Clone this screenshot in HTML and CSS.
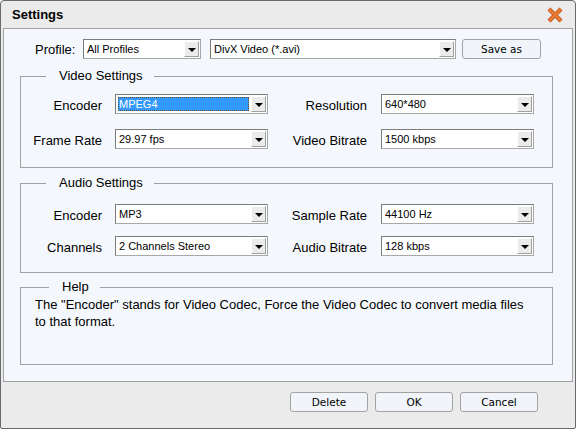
FILE: index.html
```html
<!DOCTYPE html>
<html lang="en">
<head>
    <meta charset="UTF-8">
    <title>Settings</title>
    <link rel="stylesheet" href="styles.css">
</head>
<body>
<div class="window">
    <div class="titlebar">
        <span class="title">Settings</span>
        <svg class="close" width="16" height="16" viewBox="0 0 16 16">
            <path d="M2 2 L14 14 M14 2 L2 14" stroke="#b5501a" stroke-width="4.2" fill="none"/>
            <path d="M2 2 L14 14 M14 2 L2 14" stroke="#ec7a32" stroke-width="2.6" fill="none"/>
        </svg>
    </div>

    <div class="panel">
        <div class="profile-row">
            <span class="profile-label">Profile:</span>
            <div class="combo profile-combo"><span class="combo-value">All Profiles</span><span class="combo-arrow"></span></div>
            <div class="combo format-combo"><span class="combo-value">DivX Video (*.avi)</span><span class="combo-arrow"></span></div>
            <button type="button" class="btn save-btn">Save as</button>
        </div>

        <fieldset class="group video-group">
            <legend>Video Settings</legend>
            <div class="fields">
                <span class="field-label">Encoder</span>
                <div class="combo"><span class="combo-value selected">MPEG4</span><span class="combo-arrow"></span></div>
                <span class="field-label right">Resolution</span>
                <div class="combo"><span class="combo-value">640*480</span><span class="combo-arrow"></span></div>

                <span class="field-label">Frame Rate</span>
                <div class="combo"><span class="combo-value">29.97 fps</span><span class="combo-arrow"></span></div>
                <span class="field-label right">Video Bitrate</span>
                <div class="combo"><span class="combo-value">1500 kbps</span><span class="combo-arrow"></span></div>
            </div>
        </fieldset>

        <fieldset class="group audio-group">
            <legend>Audio Settings</legend>
            <div class="fields">
                <span class="field-label">Encoder</span>
                <div class="combo"><span class="combo-value">MP3</span><span class="combo-arrow"></span></div>
                <span class="field-label right">Sample Rate</span>
                <div class="combo"><span class="combo-value">44100 Hz</span><span class="combo-arrow"></span></div>

                <span class="field-label">Channels</span>
                <div class="combo"><span class="combo-value">2 Channels Stereo</span><span class="combo-arrow"></span></div>
                <span class="field-label right">Audio Bitrate</span>
                <div class="combo"><span class="combo-value">128 kbps</span><span class="combo-arrow"></span></div>
            </div>
        </fieldset>

        <fieldset class="group help-group">
            <legend>Help</legend>
            <p class="help-text">The "Encoder" stands for Video Codec, Force the Video Codec to convert media files to that format.</p>
        </fieldset>
    </div>

    <div class="footer">
        <button type="button" class="btn">Delete</button>
        <button type="button" class="btn">OK</button>
        <button type="button" class="btn">Cancel</button>
    </div>
</div>
</body>
</html>
```

FILE: styles.css
```css
body {
    margin: 0;
    font-family: "Liberation Sans", Arial, sans-serif;
    font-size: 13px;
    color: #000;
    background: #fff;
}
.window {
    width: 576px;
    height: 429px;
    box-sizing: border-box;
    border: 1px solid #6a6a6a;
    border-radius: 4px 4px 2px 2px;
    background: #ebebeb;
    display: flex;
    flex-direction: column;
}
.titlebar {
    height: 27px;
    display: flex;
    align-items: center;
    justify-content: space-between;
    padding: 0 12px 0 11px;
}
.title {
    font-weight: bold;
    font-size: 13px;
    margin-top: -1px;
}
.close {
    margin-top: 1px;
}
.panel {
    height: 354px;
    box-sizing: border-box;
    margin: 0 2px;
    border: 1px solid #a3a3a3;
    background: #f4f8fc;
    padding-top: 10px;
}
.profile-row {
    display: flex;
    align-items: center;
    padding-left: 31px;
    height: 20px;
}
.profile-label {
    width: 48px;
}
.profile-combo {
    width: 118px;
}
.format-combo {
    width: 246px;
    margin-left: 9px;
}
.save-btn {
    margin-left: 6px;
    width: 79px;
}

/* combo boxes */
.combo {
    display: flex;
    height: 20px;
    box-sizing: border-box;
    border: 1px solid #7c7c7c;
    border-right-color: #a8a8a8;
    border-bottom-color: #a8a8a8;
    background: #fff;
}
.combo-value {
    flex: 1;
    font-size: 11px;
    line-height: 18px;
    padding-left: 3px;
    white-space: nowrap;
    overflow: hidden;
}
.combo-value.selected {
    margin: 2px 1px 2px 2px;
    padding-left: 1px;
    line-height: 14px;
    background: #3399ff;
    color: #fff;
    outline: 1px dotted #6b4a2a;
    outline-offset: -1px;
}
.combo-arrow {
    width: 15px;
    margin: 1px;
    box-sizing: border-box;
    background: #ebebeb;
    border: 1px solid #fff;
    border-right-color: #a0a0a0;
    border-bottom-color: #a0a0a0;
    display: flex;
    align-items: center;
    justify-content: center;
}
.combo-arrow::after {
    content: "";
    border-left: 4px solid transparent;
    border-right: 4px solid transparent;
    border-top: 4px solid #000;
    margin-top: 1px;
}

/* groups */
.group {
    margin: 0 0 0 16px;
    width: 533px;
    box-sizing: border-box;
    padding: 0;
    border: 1px solid #a0a0a0;
    min-inline-size: 0;
}
.group legend {
    margin-left: 25px;
    padding: 0 11px 0 13px;
    line-height: 16px;
    font-size: 13px;
}
.video-group {
    margin-top: 9px;
}
.audio-group {
    margin-top: 7px;
}
.help-group {
    margin-top: 6px;
}
.help-group legend {
    margin-left: 28px;
}
.fields {
    display: grid;
    grid-template-columns: 94px 153px 113px 153px;
    align-items: center;
}
.video-group .fields {
    row-gap: 15px;
    padding: 10px 0 18px;
}
.audio-group .fields {
    row-gap: 12px;
    padding: 13px 0 16px;
}
.field-label {
    text-align: right;
    padding-right: 13px;
    padding-top: 2px;
}
.field-label.right {
    padding-right: 14px;
}
.help-text {
    margin: 0;
    padding: 1px 20px 0 14px;
    line-height: 17px;
    height: 68px;
}

/* buttons */
.btn {
    height: 20px;
    box-sizing: border-box;
    border: 1px solid #a2a2a2;
    border-radius: 3px;
    background: #f1f5fa;
    font-family: "DejaVu Sans", Tahoma, sans-serif;
    font-size: 10.5px;
    color: #000;
    padding: 0;
}
.footer {
    display: flex;
    justify-content: flex-end;
    gap: 7px;
    padding: 10px 37px 0 0;
}
.footer .btn {
    width: 78px;
}
```
